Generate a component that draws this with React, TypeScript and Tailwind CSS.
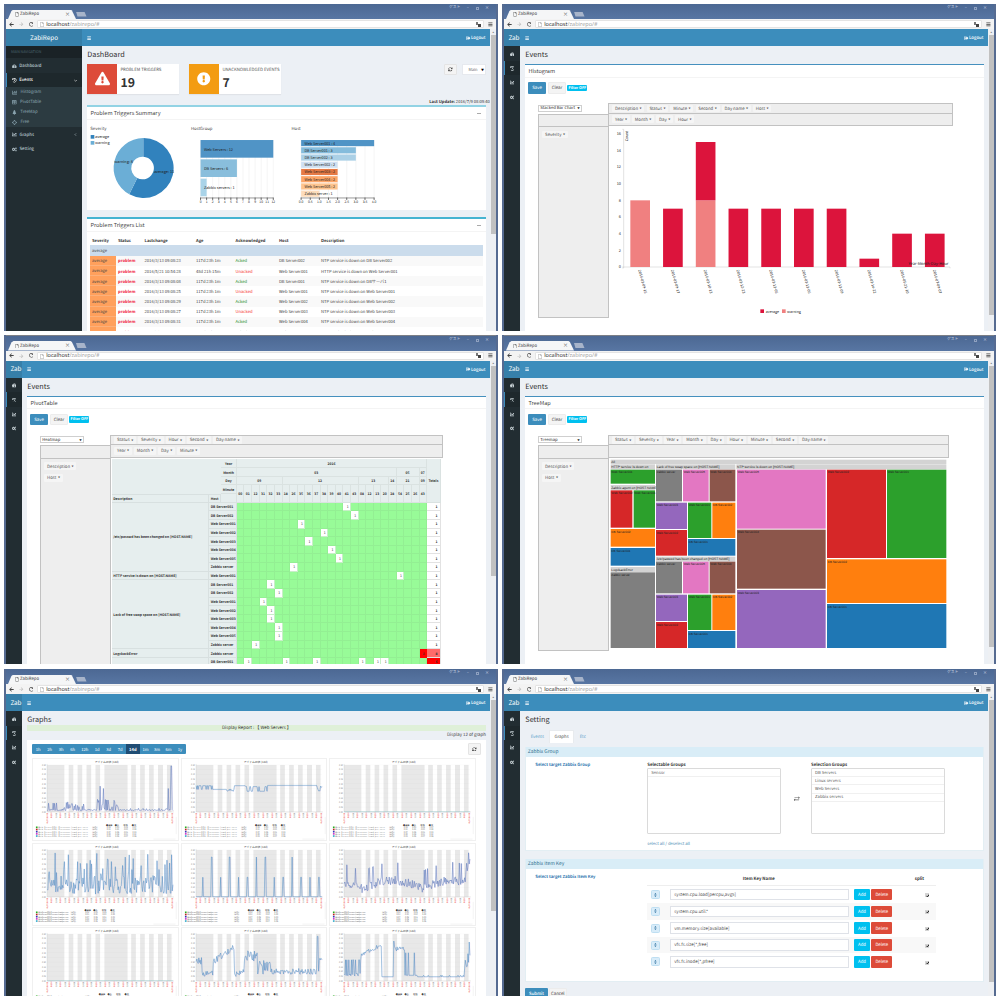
import React from "react";
import {
  FaBars, FaChartBar, FaChartLine, FaCogs, FaExchangeAlt, FaExclamationCircle, FaExclamationTriangle,
  FaHistory, FaSignOutAlt, FaTable, FaTachometerAlt, FaTree, FaArrowLeft, FaArrowRight, FaRedo, FaRegFile,
} from "react-icons/fa";
import { FaArrowsRotate } from "react-icons/fa6";

type Kids = { children?: React.ReactNode };

/* ---------- browser chrome ---------- */

function TitleBar({ tall }: { tall?: boolean }) {
  return (
    <div className={`${tall ? "h-[15.6px] border-t border-[#7c7f86]" : "h-[15px]"} flex shrink-0 items-end justify-between bg-linear-to-b from-[#4c6893] to-[#5876a3] pl-[2px]`}>
      <div className="flex items-end">
        <div className="flex h-[9.5px] w-[68px] items-center justify-between bg-[#f5f6f7] pr-[6px] pl-[6.5px] [clip-path:polygon(0_100%,5%_15%,8%_0,92%_0,94%_10%,100%_100%)]">
          <span className="flex items-center gap-[1.5px] text-[4.3px] text-[#444]">
            <FaRegFile className="h-[4.5px] w-[4px] text-[#666]" />
            ZabiRepo
          </span>
          <span className="text-[5px] text-[#333]">×</span>
        </div>
        <div className="mb-[2.5px] h-[5px] w-[10.5px] bg-[#a7b4ca] [clip-path:polygon(0_0,80%_0,100%_100%,14%_100%)]" />
      </div>
      <div className={`${tall ? "mb-[8.5px]" : "mb-[9px]"} flex items-center gap-[6.5px] pr-[7px] text-[4px] text-[#ccd5e3]`}>
        <span className="text-[3.8px]">ゲスト</span>
        <span>–</span>
        <span className="h-[3px] w-[3px] border border-[#8fa1c0]" />
        <span>×</span>
      </div>
    </div>
  );
}

function AddressBar() {
  return (
    <div className="flex h-[10.4px] shrink-0 items-center bg-[#f3f3f3] text-[#444]">
      <FaArrowLeft className="ml-[3px] size-[5px]" />
      <FaArrowRight className="ml-[5px] size-[4.5px] text-[#c4c4c4]" />
      <FaRedo className="ml-[5px] size-[4.7px]" />
      <div className="ml-[4px] flex h-[8.5px] flex-1 items-center justify-between rounded-[1px] border border-[#e4e4e4] bg-white pr-[2px] pl-[2px]">
        <span className="flex items-center pt-[0.8px] font-['Open_Sans',sans-serif] text-[5.55px] text-[#999]">
          <FaRegFile className="mr-[2px] h-[5px] w-[4px] text-[#aaa]" />
          <span className="text-[#222]">localhost</span>/zabirepo/#
        </span>
        <span className="flex h-[5px] w-[5.5px] items-start">
          <i className="block h-[3px] w-[3px] bg-[#777]" />
          <i className="mt-[2px] block h-[3px] w-[3px] bg-[#444]" />
        </span>
      </div>
      <FaBars className="mr-[3px] ml-[4px] size-[4.8px]" />
    </div>
  );
}

const miniIcons = [FaTachometerAlt, FaHistory, FaChartLine, FaCogs];

function MiniSidebar() {
  return (
    <div className="w-[16px] shrink-0 bg-[#222d32] pt-[0.5px]">
      {miniIcons.map((Icon, i) => (
        <div key={i} className={`flex h-[14.4px] items-center border-l pt-[0.6px] pl-[4.6px] ${i === 1 ? "border-[#3c8dbc] bg-[#1e282c]" : "border-transparent"}`}>
          <Icon className="size-[4.8px] text-[#cfd9dd]" />
        </div>
      ))}
    </div>
  );
}

function SideRow({ icon, label, arrow, on }: { icon: React.ReactNode; label: string; arrow?: "down" | "left"; on?: boolean }) {
  return (
    <div className={`flex h-[14.4px] items-center border-l pt-[1px] pr-[5px] pl-[5px] text-[4.3px] font-medium ${on ? "border-[#3c8dbc] bg-[#1e282c] text-white" : "border-transparent text-[#b8c7ce]"}`}>
      {icon}
      <span className="ml-[2.6px] flex-1">{label}</span>
      {arrow && (
        <svg className="size-[3.2px]" viewBox="0 0 10 10" fill="none" stroke="currentColor" strokeWidth="1.8">
          <path d={arrow === "down" ? "M1 3l4 4 4-4" : "M6.5 1.5L3 5l3.5 3.5"} />
        </svg>
      )}
    </div>
  );
}

function FullSidebar() {
  const sub: [React.ReactNode, string][] = [
    [<FaChartBar className="size-[5px]" />, "Histogram"],
    [<FaTable className="size-[4.5px]" />, "PivotTable"],
    [<FaTree className="size-[4.8px]" />, "TreeMap"],
    [<svg className="size-[5px]" viewBox="0 0 10 10" fill="none" stroke="currentColor" strokeWidth="1.4"><circle cx="5" cy="5" r="3.2" /><path d="M5 0v2M5 8v2M0 5h2M8 5h2" /></svg>, "Free"],
  ];
  return (
    <div className="w-[76px] shrink-0 bg-[#222d32]">
      <div className="flex h-[12.3px] items-center bg-[#1a2226] pt-[1px] pl-[5px] text-[3.6px] text-[#4b646f]">MAIN NAVIGATION</div>
      <SideRow icon={<FaTachometerAlt className="size-[4.6px]" />} label="Dashboard" />
      <SideRow icon={<FaHistory className="size-[4.6px]" />} label="Events" arrow="down" on />
      <div className="bg-[#2c3b41] text-[4.3px] text-[#8aa4af]">
        {sub.map(([icon, label]) => (
          <div key={label} className="flex h-[10px] items-center gap-[3.5px] pt-[0.8px] pl-[6px]">{icon}{label}</div>
        ))}
      </div>
      <SideRow icon={<FaChartLine className="size-[4.8px]" />} label="Graphs" arrow="left" />
      <SideRow icon={<FaCogs className="size-[4.8px]" />} label="Setting" />
    </div>
  );
}

function Browser({ full, tall, thumb, title, children }: Kids & { full?: boolean; tall?: boolean; thumb: string; title: string }) {
  return (
    <section className="flex min-w-0 flex-col overflow-hidden border-r-2 border-l-2 border-[#566b91] bg-white">
      <TitleBar tall={tall} />
      <AddressBar />
      <div className="flex min-h-0 flex-1">
        <div className="flex min-w-0 flex-1 flex-col">
          <header className="flex h-[16.6px] shrink-0 items-center bg-[#3c8dbc] text-white">
            <div className={`${full ? "w-[76px] justify-center" : "w-[16px] pl-[4.4px]"} flex h-full shrink-0 items-center bg-[#367fa9] text-[6.3px]`}>
              {full ? "ZabiRepo" : "Zab"}
            </div>
            <FaBars className="ml-[5px] size-[4.2px]" />
            <div className="mr-[5px] ml-auto flex items-center pt-[0.8px] text-[4.3px] font-medium">
              <FaSignOutAlt className="mr-[0.5px] size-[4.4px]" />Logout
            </div>
          </header>
          <div className="flex min-h-0 flex-1">
            {full ? <FullSidebar /> : <MiniSidebar />}
            <main className="flex min-w-0 flex-1 flex-col overflow-hidden bg-[#ecf0f5] pr-[4.5px] pl-[5.3px]">
              <h1 className="flex h-[18px] shrink-0 items-center pt-[2px] text-[7.3px] text-[#333]">{title}</h1>
              {children}
            </main>
          </div>
        </div>
        <div className="w-[5.6px] shrink-0 bg-[#eef0f3]">
          <div className="flex h-[5.5px] items-center justify-center text-[3px] text-[#777]">▴</div>
          <div className={`${thumb} mx-auto w-[4.6px] bg-[#c1c1c1]`} />
        </div>
      </div>
    </section>
  );
}

/* ---------- dashboard ---------- */

function InfoBox({ color, icon, label, value }: { color: string; icon: React.ReactNode; label: string; value: string }) {
  return (
    <div className="flex h-[29.6px] w-[92px] bg-white shadow-[0_1px_1px_rgba(0,0,0,0.05)]">
      <div className={`${color} flex w-[29.6px] shrink-0 items-center justify-center text-white`}>{icon}</div>
      <div className="min-w-0 pt-[4px] pl-[3.5px] text-[#333]">
        <div className="text-[4.3px] text-[#555]">{label}</div>
        <div className="mt-[3.4px] text-[12.3px] font-bold">{value}</div>
      </div>
    </div>
  );
}

const hostGroups: [string, number, string][] = [
  ["Web Servers : 12", 12, "#5094c6"], ["DB Servers : 6", 6, "#89bedc"], ["Zabbix servers : 1", 1, "#a9d3e8"],
];
const hosts: [string, number, string][] = [
  ["Web Server001 : 4", 4, "#5094c6"], ["DB Server001 : 3", 3, "#85bcdc"], ["DB Server002 : 3", 3, "#abd0e6"],
  ["Web Server002 : 2", 2, "#cfe0f2"], ["Web Server003 : 2", 2, "#e67a45"], ["Web Server004 : 2", 2, "#fca567"],
  ["Web Server005 : 2", 2, "#fdc38d"], ["Zabbix server : 1", 1, "#fddcbb"],
];

function SummaryCharts() {
  return (
    <svg className="h-[91px] w-full" viewBox="260 354 1197 273" fontSize="11.5" fill="#222">
      <g fill="#444" fontSize="12.8">
        <text x="270" y="384">Severity</text><text x="572" y="384">HostGroup</text><text x="874" y="384">Host</text>
      </g>
      <rect x="271" y="399" width="11" height="11" fill="#3182bd" /><text x="284" y="409">average</text>
      <rect x="271" y="417" width="11" height="11" fill="#6baed6" /><text x="284" y="427">warning</text>
      <path d="M429 408a90 90 0 1 1 -42 169L411 528A34 34 0 1 0 429 464Z" fill="#3182bd" />
      <path d="M387 577A90 90 0 0 1 429 408V464A34 34 0 0 0 411 528Z" fill="#6baed6" />
      <text x="342" y="484">warning: 8</text><text x="461" y="514">average: 11</text>
      {Array.from({ length: 13 }, (_, i) => (
        <g key={i}>
          <path d={`M${601 + i * 18.2} 414V588`} stroke="#e2e2e2" />
          <path d={`M${601 + i * 18.2} 587v7`} stroke="#222" strokeWidth="2" />
          <text x={601 + i * 18.2} y="603" textAnchor="middle" fontSize="10">{i}</text>
        </g>
      ))}
      <path d="M600 588H820" stroke="#333" strokeWidth="1.5" />
      {hostGroups.map(([n, v, c], i) => (
        <g key={n}>
          <rect x="601" y={414 + i * 58} width={v * 18.2} height="53" fill={c} />
          <text x="611" y={446 + i * 58}>{n}</text>
        </g>
      ))}
      {Array.from({ length: 9 }, (_, i) => (
        <g key={i}>
          <path d={`M${903 + i * 27.4} 414V588`} stroke="#e2e2e2" />
          <path d={`M${903 + i * 27.4} 587v7`} stroke="#222" strokeWidth="2" />
          <text x={903 + i * 27.4} y="603" textAnchor="middle" fontSize="10">{(i / 2).toFixed(1)}</text>
        </g>
      ))}
      <path d="M902 588H1123" stroke="#333" strokeWidth="1.5" />
      {hosts.map(([n, v, c], i) => (
        <g key={n}>
          <rect x="903" y={414 + i * 21.7} width={v * 54.8} height="18.5" fill={c} />
          <text x="913" y={427.5 + i * 21.7} fontSize="11.2">{n}</text>
        </g>
      ))}
    </svg>
  );
}

const triggers: [string, string, string, string, string][] = [
  ["2016/3/13 09:08:23", "117d 23h 1m", "Acked", "DB Server002", "NTP service is down on DB Server002"],
  ["2016/5/21 10:54:28", "48d 21h 15m", "Unacked", "Web Server001", "HTTP service is down on Web Server001"],
  ["2016/3/13 09:08:08", "117d 23h 1m", "Acked", "DB Server001", "NTP service is down on DBサーバ1"],
  ["2016/3/13 09:08:25", "117d 23h 1m", "Unacked", "Web Server001", "NTP service is down on Web Server001"],
  ["2016/3/13 09:08:29", "117d 23h 1m", "Acked", "Web Server002", "NTP service is down on Web Server002"],
  ["2016/3/13 09:08:27", "117d 23h 1m", "Unacked", "Web Server003", "NTP service is down on Web Server003"],
  ["2016/3/13 09:08:31", "117d 23h 1m", "Acked", "Web Server004", "NTP service is down on Web Server004"],
  ["2016/3/13 09:08:33", "117d 23h 1m", "Acked", "Web Server005", "NTP service is down on Web Server005"],
];

const triggerCols = "grid grid-cols-[26px_26.5px_51.5px_39.5px_43.5px_42px_1fr] items-center";
const triggerCell = "pt-[1.2px] pl-[1.7px]";

function PanelHead({ title, minus }: { title: string; minus?: boolean }) {
  return (
    <div className="flex h-[12.6px] shrink-0 items-center justify-between border-b border-[#f4f4f4] px-[3.2px] pt-[2.6px] text-[5.5px] text-[#444]">
      <span>{title}</span>
      {minus && <span className="mr-[2px] mb-[1px] h-px w-[4px] bg-[#aaa]" />}
    </div>
  );
}

function Dashboard() {
  return (
    <Browser full thumb="h-[199px]" title="DashBoard">
      <div className="flex shrink-0 items-start">
        <InfoBox color="bg-[#dd4b39]" label="PROBLEM TRIGGERS" value="19" icon={<FaExclamationTriangle className="size-[15px]" />} />
        <div className="w-[10px]" />
        <InfoBox color="bg-[#f39c12]" label="UNACKNOWLEDGED EVENTS" value="7" icon={<FaExclamationCircle className="size-[13.5px]" />} />
        <div className="ml-auto flex h-[11.5px] w-[12.5px] items-center justify-center rounded-[1px] border border-[#e4e4e4] bg-[#f4f4f4] text-[#333]">
          <FaArrowsRotate className="size-[4.6px]" />
        </div>
        <div className="ml-[5.5px] flex h-[11.5px] w-[23.5px] items-center justify-between border border-[#e6e9ee] bg-white pt-[1px] pr-[1px] pl-[5px] text-[4px] text-[#666]">
          Main<span className="text-[3px] text-black">▼</span>
        </div>
      </div>
      <div className="mr-[-4px] flex h-[11.4px] shrink-0 items-end justify-end pb-[0.4px] text-[4.15px] whitespace-pre text-[#333]"><b>Last Update: </b>2016/7/9 08:09:40</div>
      <div className="h-[104.6px] shrink-0 border-t-2 border-[#92d3e4] bg-white">
        <PanelHead title="Problem Triggers Summary" minus />
        <SummaryCharts />
      </div>
      <div className="mt-[7.4px] shrink-0 border-t-2 border-[#46b4d1] bg-white">
        <PanelHead title="Problem Triggers List" minus />
        <div className="px-[3px] pt-[3.5px] text-[4.15px] text-[#444]">
          <div className={`${triggerCols} h-[10.4px] pt-[1px] pl-[1.7px] font-bold text-[#333]`}>
            {["Severity", "Status", "Lastchange", "Age", "Acknowledged", "Host", "Description"].map((h) => <span key={h}>{h}</span>)}
          </div>
          <div className="flex h-[10.3px] items-center bg-[#cbdcec] pt-[1px] pl-[1.7px]">average</div>
          {triggers.map((t, i) => (
            <div key={i} className={`${triggerCols} h-[10.2px] ${i % 2 ? "bg-white" : "bg-[#f9f9f9]"}`}>
              <span className="flex h-full items-center border-b border-[#fbb07a] bg-[#ffa05c] pt-[2px] pl-[1.7px]">average</span>
              <span className={`${triggerCell} font-bold text-[#f0203a]`}>problem</span>
              <span className={triggerCell}>{t[0]}</span>
              <span className={triggerCell}>{t[1]}</span>
              <span className={`${triggerCell} ${t[2] === "Acked" ? "text-[#208a28]" : "text-[#f52a2a]"}`}>{t[2]}</span>
              <span className={triggerCell}>{t[3]}</span>
              <span className={triggerCell}>{t[4]}</span>
            </div>
          ))}
        </div>
      </div>
    </Browser>
  );
}

/* ---------- pivot pages ---------- */

function Chips({ items, col }: { items: string[]; col?: boolean }) {
  return (
    <div className={`flex ${col ? "flex-col items-start gap-[4px] pt-[3.8px]" : "h-full items-center gap-[2.2px]"} pl-[3px] text-[4.3px] text-[#555]`}>
      {items.map((t) => (
        <span key={t} className="flex h-[7.6px] items-center gap-[1.5px] rounded-[1px] bg-[#f5f5f5] px-[2.8px] pt-[1.2px]">
          {t}<span className="w-[2px] text-[2.1px]">▼</span>
        </span>
      ))}
    </div>
  );
}

type PivotProps = Kids & {
  title: string; select: string; top: string[]; cols: string[]; rows: string[]; width: string; left: string; thumb: string; tall?: boolean;
};

function PivotPage({ title, select, top, cols, rows, width, left, thumb, tall, children }: PivotProps) {
  return (
    <Browser title="Events" thumb={thumb} tall={tall}>
      <div className="min-h-0 flex-1 border-t-[1.5px] border-[#4590be] bg-white">
        <PanelHead title={title} />
        <div className="flex items-center pt-[4.8px] pl-[3px] text-[4.3px]">
          <div className="flex h-[11.4px] w-[17.6px] items-center justify-center rounded-[1px] bg-[#3c8dbc] pt-[1px] text-white">Save</div>
          <div className="ml-[2px] flex h-[11.4px] w-[18px] items-center justify-center rounded-[1px] border border-[#ececec] bg-[#f4f4f4] pt-[1px] text-[#444]">Clear</div>
          <div className="ml-[1.5px] flex h-[6.4px] w-[20px] items-center justify-center rounded-[1px] bg-[#00c0ef] pt-[0.6px] text-[3.7px] font-bold text-white">Filter OFF</div>
        </div>
        <div className={`${width} mt-[9.6px] ml-[13px]`}>
          <div className="flex h-[10.2px]">
            <div className="w-[70px] shrink-0">
              <div className="mt-[1.2px] flex h-[7.2px] w-[43.5px] items-center justify-between border border-[#cfcfcf] bg-white px-[1px] pt-[0.8px] text-[4.2px] text-[#222]">
                {select}<span className="text-[2.5px]">▼</span>
              </div>
            </div>
            <div className="flex-1 border border-[#c2c2c2] bg-[#eee]"><Chips items={top} /></div>
          </div>
          <div className="flex h-[12.4px]">
            <div className="w-[70px] shrink-0 border-t border-l border-[#c2c2c2] bg-[#eee]" />
            <div className="flex-1 border border-t-0 border-[#c2c2c2] bg-[#eee]"><Chips items={cols} /></div>
          </div>
          <div className="flex items-start">
            <div className={`${left} w-[70.5px] shrink-0 border border-[#c2c2c2] bg-[#eee]`}><Chips items={rows} col /></div>
            {children}
          </div>
        </div>
      </div>
    </Browser>
  );
}

const barData: [string, number, number][] = [
  ["2016-03-09-15", 8, 0], ["2016-03-09-17", 0, 7], ["2016-03-10-13", 8, 7], ["2016-03-12-23", 0, 7], ["2016-03-13-05", 0, 7],
  ["2016-03-13-06", 0, 7], ["2016-03-13-09", 0, 7], ["2016-03-14-22", 0, 1], ["2016-05-21-10", 0, 4], ["2016-07-09-07", 0, 4],
];

function Histogram() {
  return (
    <PivotPage title="Histogram" select="Stacked Bar Chart" top={["Description", "Status", "Minute", "Second", "Day name", "Host"]}
      cols={["Year", "Month", "Day", "Hour"]} rows={["Severity"]} width="w-[414.5px]" left="h-[192px]" thumb="h-[280px]">
      <svg className="h-[192px] w-[343.5px] shrink-0 overflow-visible" viewBox="327 378 1030.5 576" fontSize="11" fill="#222">
        <path d="M367 388h4V804h-4M367 801H1350v4" fill="none" stroke="#bbb" strokeWidth="1.3" />
        {[0, 2, 4, 6, 8, 10, 12, 14, 16].map((n) => <text key={n} x="363" y={805 - n * 25} textAnchor="end" fontSize="11.5">{n}</text>)}
        <text transform="translate(385 424) rotate(-90)" fontSize="11">Count</text>
        {barData.map(([d, w, a], i) => (
          <g key={d}>
            <rect x={391 + i * 98.2} y={801 - w * 25} width="59" height={w * 25} fill="#f08080" />
            <rect x={391 + i * 98.2} y={801 - (w + a) * 25} width="59" height={a * 25} fill="#dc143c" />
            <text transform={`translate(${415 + i * 98.2} 811) rotate(75)`} fontSize="11">{d}</text>
          </g>
        ))}
        <text x="1345" y="795" textAnchor="end" fontSize="11.8">Year-Month-Day-Hour</text>
        <rect x="781" y="928" width="11" height="11" fill="#dc143c" /><text x="797" y="938" fontSize="11">average</text>
        <rect x="846" y="928" width="11" height="11" fill="#f08080" /><text x="861" y="938" fontSize="11">warning</text>
      </svg>
    </PivotPage>
  );
}

const minutes = "00 01 12 31 32 33 18 26 35 36 37 38 39 40 41 43 08 12 13 20 28 54 25 26 43".split(" ");
const serverNames = ["DB Server001", "DB Server002", "Web Server001", "Web Server002", "Web Server003", "Web Server004", "Web Server005", "Zabbix server"];
const groups: { name: string; hosts: string[]; hits: number[][] }[] = [
  { name: "/etc/passwd has been changed on [HOST.NAME]", hosts: serverNames, hits: [[14], [15], [8], [11], [9], [12], [13], [7]] },
  { name: "HTTP service is down on [HOST.NAME]", hosts: ["Web Server001"], hits: [[21]] },
  { name: "Lack of free swap space on [HOST.NAME]", hosts: serverNames, hits: [[4], [5], [3], [4], [4], [5], [5], [2]] },
  { name: "LogckackError", hosts: ["Zabbix server"], hits: [[24]] },
  { name: "", hosts: ["DB Server001"], hits: [[1, 6, 10, 16, 18, 19]] },
];
const months: [string, number][] = [["03", 21], ["05", 3], ["07", 1]];
const days: [string, number][] = [["09", 6], ["12", 10], ["13", 4], ["14", 1], ["21", 3], ["09", 1]];

const headCell = "flex items-center justify-center border-r border-b border-[#dae2e1] bg-[#e6eeee] pt-[1px]";
const sideCell = "flex items-center overflow-hidden border-r border-b border-[#d8e0e0] bg-[#e6eeee] pt-[0.6px] pl-[1.5px]";

function PivotTable() {
  return (
    <PivotPage tall title="PivotTable" select="Heatmap" top={["Status", "Severity", "Hour", "Second", "Day name"]}
      cols={["Year", "Month", "Day", "Minute"]} rows={["Description", "Host"]} width="w-[402.5px]" left="h-[220px]" thumb="h-[210px]">
      <div className="mt-[1px] ml-[0.9px] grid shrink-0 auto-rows-[8.64px] grid-cols-[97.5px_12px_15.7px_repeat(25,7.61px)_13.5px] grid-rows-[9.4px_8.7px_8.7px_8.7px_8.7px] text-[3.4px] font-bold text-[#333]">
        <div className="col-span-2 row-span-4 bg-[#e6eeee]" />
        <div className={headCell}>Year</div>
        <div className={`${headCell} col-span-25`}>2016</div>
        <div className={`${headCell} row-span-5`}>Totals</div>
        <div className={headCell}>Month</div>
        {months.map(([m, n]) => <div key={m} className={headCell} style={{ gridColumn: `span ${n}` }}>{m}</div>)}
        <div className={headCell}>Day</div>
        {days.map(([m, n], i) => <div key={i} className={headCell} style={{ gridColumn: `span ${n}` }}>{m}</div>)}
        <div className={headCell}>Minute</div>
        {minutes.map((m, i) => <div key={i} className={`${headCell} row-span-2`}>{m}</div>)}
        <div className={`${sideCell} border-t`}>Description</div>
        <div className={`${sideCell} border-t`}>Host</div>
        <div className={headCell} />
        {groups.map((g) => (
          <React.Fragment key={g.name}>
            <div className={sideCell} style={{ gridRow: `span ${g.hosts.length}` }}>{g.name}</div>
            {g.hosts.map((h, r) => {
              const red = g.name === "LogckackError";
              const many = g.hits[r].length > 1;
              return (
                <React.Fragment key={h}>
                  <div className={`${sideCell} col-span-2 whitespace-nowrap`}>{h}</div>
                  {minutes.map((_, c) => {
                    const hit = g.hits[r].includes(c);
                    return (
                      <div key={c} className={`flex items-center justify-end border-r border-b pt-[0.6px] pr-[1.5px] font-normal ${hit ? (red ? "border-[#ff0000] bg-[#ff0000]" : "border-[#c8eec8] bg-white") : "border-[#93ef93] bg-[#98fb98]"}`}>
                        {hit ? (red ? "8" : "1") : ""}
                      </div>
                    );
                  })}
                  <div className={`flex items-center justify-end border-r border-b border-[#e2e2e2] pt-[0.6px] pr-[2px] ${red ? "bg-[#ff6b6b]" : many ? "bg-[#ff0000]" : "bg-white"}`}>{red ? "8" : many ? "6" : "1"}</div>
                </React.Fragment>
              );
            })}
          </React.Fragment>
        ))}
      </div>
    </PivotPage>
  );
}

const BL = "#1f77b4", OR = "#ff7f0e", GR = "#2ca02c", RD = "#d62728", PU = "#9467bd", BR = "#8c564b", PK = "#e377c2", GY = "#7f7f7f", HD = "#d3d3d3";
type Tile = [number, number, number, number, string, string];
const cluster = (y: number, h: number): Tile[] => [
  [468, y, 546, y + 95, GY, "Zabbix server"], [549, y, 626, y + 95, PK, "Web Server005"], [629, y, 706, y + 95, BR, "Web Server004"],
  [468, y + 99, 561, y + 178, PU, "Web Server003"], [564, y + 99, 634, y + 205, GR, "Web Server001"], [637, y + 99, 706, y + 205, OR, "DB Server002"],
  [468, y + 181, 561, y + h, RD, "Web Server002"], [564, y + 208, 706, y + h, BL, "DB Server001"],
];
const tiles: Tile[] = [
  [332, 375, 1339, 388, HD, "All"],
  [332, 389, 465, 404, HD, "HTTP service is down on"], [332, 405, 465, 447, GR, "Web Server001"],
  [332, 451, 465, 466, HD, "Zabbix agent on [HOST.NAME]"], [332, 467, 397, 579, RD, "Web Server002"], [401, 467, 465, 579, GR, "Web Server001"],
  [332, 583, 465, 636, OR, "DB Server002"], [332, 640, 465, 693, BL, "DB Server001"],
  [332, 697, 465, 712, HD, "LogckackError"], [332, 713, 465, 940, GY, "Zabbix server"],
  [468, 389, 706, 404, HD, "Lack of free swap space on [HOST.NAME]"], ...cluster(405, 258),
  [468, 666, 706, 681, HD, "/etc/passwd has been changed on [HOST.NAME]"], ...cluster(681, 259),
  [709, 389, 1339, 404, HD, "NTP service is down on [HOST.NAME]"],
  [711, 405, 977, 582, PK, "Web Server005"], [711, 585, 977, 762, BR, "Web Server004"], [711, 766, 977, 940, PU, "Web Server003"],
  [981, 405, 1158, 670, RD, "Web Server002"], [1161, 405, 1339, 670, GR, "Web Server001"],
  [981, 674, 1339, 805, OR, "DB Server002"], [981, 808, 1339, 940, BL, "DB Server001"],
];

function TreeMap() {
  return (
    <PivotPage tall title="TreeMap" select="Treemap" top={["Status", "Severity", "Year", "Month", "Day", "Hour", "Minute", "Second", "Day name"]}
      cols={[]} rows={["Description", "Host"]} width="w-[410.5px]" left="h-[193px]" thumb="h-[281px]">
      <svg className="h-[193px] w-[339px] shrink-0" viewBox="327 370 1017 579" fontFamily="Liberation Sans, sans-serif" fill="#222">
        {tiles.map(([x, y, x2, y2, c, t], i) => (
          <g key={i}>
            <rect x={x} y={y} width={x2 - x} height={y2 - y} fill={c} />
            <text x={x + 2} y={y + 11} fontSize={c === HD ? 10 : 9.2}>{t}</text>
          </g>
        ))}
      </svg>
    </PivotPage>
  );
}

/* ---------- graphs ---------- */

const bands: [number, number][] = [[0, 52], [65, 14], [92, 14], [119, 14], [146, 14], [173, 70], [254, 14], [281, 14], [308, 14], [335, 15], [362, 14]];

function noise(seed: number) {
  let s = seed;
  return () => {
    s = (s * 16807) % 2147483647;
    return s / 2147483647;
  };
}

function series(kind: number): number[] {
  const r = noise(kind * 7919 + 17);
  return Array.from({ length: 191 }, (_, i) => {
    const x = i * 2;
    const n = r();
    switch (kind) {
      case 0: {
        const burst = x > 50 && x < 115 ? 0.2 : x > 150 && x < 215 ? 0.24 : 0.05;
        if (x === 160) return 0.55;
        if (x === 170) return 0.5;
        if (x === 366) return 0.5;
        if (x === 374 || x === 376) return 0.98;
        return 0.03 + n * n * burst + (x < 30 && n > 0.8 ? 0.12 : 0);
      }
      case 1:
        if (x < 50) return 0.52 + (n > 0.7 ? -0.04 : 0.04);
        if (x < 92) return 0.48;
        if (x < 115) return 0.44 + n * 0.05;
        if (x < 150) return 0.56;
        if (x < 215) return n > 0.6 ? 0.54 : 0.44;
        if (x < 365) return 0.565;
        return 0.42 + n * 0.13;
      case 2: case 6: return 0.005;
      case 3: return 0.06 + n * 0.5 + (n > 0.8 ? r() * 0.42 : 0);
      case 4: {
        const k = Math.round((x - 20) / 27);
        const near = Math.abs(x - 20 - k * 27) < 1.1;
        return near ? ([0, 2, 4, 5, 8, 9, 11, 12, 13].includes(k) ? 0.42 : 0.85) : 0.005;
      }
      case 5: return x > 366 ? 0.55 + n * 0.4 : 0.08 + 0.18 * Math.abs(Math.sin(x / 58 + 2.2)) + n * 0.2 + (n > 0.93 ? 0.28 : 0);
      case 7: {
        if (x < 18) return 0.35 + n * 0.15;
        if (x < 52) return 0.1 + n * 0.12;
        if (x < 115) return 0.35 + (x - 52) * 0.005 + n * 0.14;
        if (x < 145) return 0.08 + n * 0.12 + (x - 115) * 0.003;
        if (x < 185) return 0.4 + n * 0.25;
        if (x > 364 && x < 370) return 0.95;
        return 0.14 + n * (x < 225 ? 0.32 : 0.13) + (x > 370 ? 0.25 : 0);
      }
      default:
        if (x < 52) return n > 0.8 ? 0.45 : 0.1 + n * 0.08;
        if (x < 114) return 0.52 + (x - 52) * 0.0035 + n * 0.08;
        if (x < 150) return 0.09;
        if (x === 150) return 0.85;
        if (x < 184) return 0.63 + n * 0.1;
        if (x < 222) return n > 0.6 ? 0.6 : 0.12;
        if (x > 362) return 0.25 + n * 0.7;
        return 0.09 + (n > 0.9 ? 0.03 : 0);
    }
  });
}

const legendText = ["Web Server001: Processor load per core", "Web Server002: Processor load per core", "Web Server003: Processor load per core", "Web Server004: Processor load per core", "Web Server005: Processor load per core"];
const legendColor = ["#22aa22", "#bb2222", "#3333bb", "#cc33cc", "#33aacc"];

function GraphCard({ kind }: { kind: number }) {
  const pts = series(kind);
  const line = pts.map((v, i) => `${i ? "L" : "M"}${44 + i * 2} ${163 - v * 142}`).join("");
  const shift = kind === 3 ? -65 : kind > 2 ? -22 : 0;
  return (
    <div className="h-[83.4px] w-[146.8px] shrink-0 border border-[#f0f0f0] bg-white">
      <svg className="h-full w-full" viewBox="3 3 434 246">
        <text x="224" y="16" textAnchor="middle" fontSize="8.5" fill="#444">アイテムの値 (14d)</text>
        {bands.map(([x, w]) => <rect key={x} x={44 + x} y="21" width={w} height="142" fill="#e8e8e8" />)}
        {Array.from({ length: 11 }, (_, i) => (
          <g key={i}>
            <path d={`M44 ${21 + i * 14.2}H424`} stroke="#000" strokeOpacity="0.06" strokeWidth="1" />
            <text x="40" y={23.5 + i * 14.2} textAnchor="end" fill="#777" fontSize="6">{((10 - i) * 0.05).toFixed(2)}</text>
          </g>
        ))}
        {Array.from({ length: 29 }, (_, i) => {
          const edge = i === 0 || i === 28;
          return (
            <text key={i} transform={`translate(${46 + i * 13.5} ${edge ? 198 : 181}) rotate(-90)`} fontSize="6" fill={edge || i % 2 ? "#ee4444" : "#777"}>
              {edge ? "06/25 08:10" : i % 2 ? "06/28" : "12:00"}
            </text>
          );
        })}
        <path d="M44 18V163H427" fill="none" stroke="#bbb" strokeWidth="1" />
        <path d={line} fill="none" stroke="#a3c" strokeWidth="0.6" opacity="0.3" transform="translate(1.5 1.5)" />
        <path d={line} fill="none" stroke={kind === 2 || kind === 6 ? "#8fd0cd" : kind === 0 || kind === 5 ? "#5578b8" : "#4a8dc2"} strokeWidth="1.5" />
        {["最新値", "最小", "平均", "最大"].map((t, i) => (
          <text key={t} x={222 + i * 26 + shift} y="204" fontWeight="bold" fontSize="6.5" fill="#333">{t}</text>
        ))}
        {legendText.map((t, i) => (
          <g key={t} fill="#555" fontSize="6">
            <rect x="10" y={207 + i * 6.6} width="5" height="5" fill={legendColor[i]} />
            <text x="17" y={212 + i * 6.6} textLength={kind < 3 ? 150 : 92}>{t}</text>
            <text x={180 + (kind === 3 ? -65 : shift)} y={212 + i * 6.6}>[平均]</text>
            {[0, 1, 2, 3].map((c) => <text key={c} x={224 + c * 26 + shift} y={212 + i * 6.6}>0.0{(i * 3 + c * 2 + 1) % 10}</text>)}
          </g>
        ))}
        <path d="M365 245H432M434 178V230" stroke="#ddd" strokeWidth="1" />
      </svg>
    </div>
  );
}

function Graphs() {
  return (
    <Browser title="Graphs" thumb="h-[211px]">
      <div className="-mt-[4.3px] flex h-[6.2px] shrink-0 items-center justify-center bg-[#dff0d8] pt-[0.8px] text-[4.4px] text-[#333]">Display Report : 【 Web Servers 】</div>
      <div className="flex h-[9px] shrink-0 items-center justify-end pb-[0.6px] text-[4.4px] text-[#444]">Display 12 of graph</div>
      <div className="min-h-0 flex-1 overflow-hidden bg-white pl-[5px]">
        <div className="flex h-[18px] items-center justify-between pt-[0.6px] pr-[5px]">
          <div className="flex h-[9.4px] items-stretch overflow-hidden rounded-[1px] bg-[#3c8dbc] text-[4.1px] text-white">
            {["1h", "2h", "3h", "6h", "12h", "1d", "3d", "7d", "14d", "1m", "3m", "6m", "1y"].map((t) => (
              <span key={t} className={`flex items-center justify-center pt-[1px] ${t === "14d" ? "w-[14px] bg-[#204d74] font-bold" : t === "12h" ? "w-[13px]" : "w-[11.5px]"}`}>{t}</span>
            ))}
          </div>
          <div className="flex h-[11.5px] w-[13px] items-center justify-center rounded-[1px] border border-[#e4e4e4] bg-[#f4f4f4] text-[#333]">
            <FaArrowsRotate className="size-[4.6px]" />
          </div>
        </div>
        <div className="grid w-[444px] grid-cols-3 gap-x-[1.2px] gap-y-[1.3px]">
          {Array.from({ length: 9 }, (_, k) => <GraphCard key={k} kind={k} />)}
        </div>
      </div>
    </Browser>
  );
}

/* ---------- settings ---------- */

function GroupList({ title, items, width }: { title: string; items: string[]; width: string }) {
  return (
    <div className={width}>
      <div className="h-[4.9px] text-[4.3px] font-bold text-[#333]">{title}</div>
      <div className="h-[66px] rounded-[1px] border border-[#dadada] text-[4.2px] text-[#555]">
        {items.map((t) => <div key={t} className="flex h-[8.3px] items-center border-b border-[#f0f0f0] pt-[0.8px] pl-[3px]">{t}</div>)}
      </div>
    </div>
  );
}

function SettingPanel({ title, hint, height, children }: Kids & { title: string; hint: string; height: string }) {
  return (
    <div className={`${height} shrink-0 border border-t-0 border-[#e3eef3] bg-white`}>
      <div className="flex h-[10px] items-center bg-[#d9edf7] pt-[1px] pl-[1.5px] text-[4.9px] text-[#31708f]">{title}</div>
      <div className="flex">
        <div className="w-[121px] shrink-0 pt-[6.4px] pl-[9px] text-[4.2px] font-bold text-[#3279b0]">{hint}</div>
        {children}
      </div>
    </div>
  );
}

function Setting() {
  const keys = ["system.cpu.load[percpu,avg5]", "system.cpu.util.*", "vm.memory.size[available]", "vfs.fs.size[*,free]", "vfs.fs.inode[*,pfree]"];
  return (
    <Browser title="Setting" thumb="h-[282px]">
      <div className="mt-[0.6px] flex h-[17px] shrink-0 items-start text-[4.3px] text-[#5b9fcb]">
        <span className="flex h-[13.5px] w-[24px] items-center justify-center pt-[1px]">Events</span>
        <span className="flex h-[13.5px] w-[24.5px] items-center justify-center border border-b-0 border-[#e8ebee] bg-white pt-[0.4px] text-[#555]">Graphs</span>
        <span className="flex h-[13.5px] w-[18px] items-center justify-center pt-[1px]">Etc</span>
      </div>
      <SettingPanel title="Zabbix Group" hint="Select target Zabbix Group" height="h-[104.8px]">
        <div className="pt-[6.2px]">
          <div className="flex items-start">
            <GroupList title="Selectable Groups" width="w-[134px]" items={["Sensor"]} />
            <div className="flex h-[71px] w-[29.8px] items-center justify-center pl-[1px]"><FaExchangeAlt className="size-[5.5px] -skew-x-12 text-[#666]" /></div>
            <GroupList title="Selection Groups" width="w-[133.5px]" items={["DB Servers", "Linux servers", "Web Servers", "Zabbix servers"]} />
          </div>
          <div className="mt-[7.8px] text-[4.2px] text-[#3c7fae]">select all / deselect all</div>
        </div>
      </SettingPanel>
      <div className="h-[7.4px] shrink-0" />
      <SettingPanel title="Zabbix Item Key" hint="Select target Zabbix Item Key" height="h-[122.8px]">
        <div className="w-[289px] pt-[4px] text-[4.3px]">
          <div className="flex h-[13.5px] items-center border-b border-[#eee] pt-[1px] font-bold text-[#333]">
            <span className="w-[223px] text-center">Item Key Name</span>
            <span className="ml-[44.5px]">split</span>
          </div>
          {keys.map((k, i) => (
            <div key={k} className={`flex h-[16.8px] items-center ${i % 2 ? "bg-[#f8f8f8]" : "bg-white"}`}>
              <span className="ml-[3.5px] flex h-[9px] w-[9px] items-center justify-center rounded-[1.5px] border border-[#bfdff2] bg-[#d8ecf9] text-[#2c6f9e]">
                <svg className="h-[4px] w-[2.8px]" viewBox="0 0 6 10" fill="currentColor"><path d="M3 0l3 4H0zM3 10l3-4H0z" /></svg>
              </span>
              <span className="ml-[10.5px] flex h-[11.6px] w-[178.5px] items-center border border-[#dfe2e8] bg-white pt-[1px] pl-[3px] text-[4.4px] text-[#555]">{k}</span>
              <span className="ml-[5px] flex h-[11.6px] w-[16.5px] items-center justify-center rounded-[1px] bg-[#00c0ef] pt-[1px] text-white">Add</span>
              <span className="ml-[1px] flex h-[11.6px] w-[21px] items-center justify-center rounded-[1px] bg-[#dd4b39] pt-[1px] text-white">Delete</span>
              <span className="mt-[1.5px] ml-[33px] flex size-[4px] items-center justify-center bg-[#d4d4d4]">
                <svg className="size-[3.6px]" viewBox="0 0 10 10" fill="none" stroke="#111" strokeWidth="2.6"><path d="M1 5l3 3 5-7" /></svg>
              </span>
            </div>
          ))}
        </div>
      </SettingPanel>
      <div className="mt-[6.5px] flex shrink-0 text-[4.3px]">
        <span className="flex h-[11.5px] w-[22.5px] items-center justify-center rounded-[1px] bg-[#3c8dbc] font-medium text-white">Submit</span>
        <span className="ml-[1px] flex h-[11.5px] w-[18px] items-center justify-center rounded-[1px] border border-[#ececec] bg-[#f4f4f4] text-[#444]">Cancel</span>
      </div>
    </Browser>
  );
}

export default function App() {
  return (
    <div className="h-[1000px] w-[1000px] overflow-hidden bg-white p-[4px] font-['Noto_Sans_CJK_JP',sans-serif] leading-none whitespace-nowrap [text-rendering:geometricPrecision]">
      <div className="grid grid-cols-[494px_494px] gap-x-[4px]">
        <div className="grid h-[327px]"><Dashboard /></div>
        <div className="grid h-[327px]"><Histogram /></div>
        <div className="mt-[4px] grid h-[329px]"><PivotTable /></div>
        <div className="mt-[4px] grid h-[329px]"><TreeMap /></div>
        <div className="mt-[5px] grid h-[327px]"><Graphs /></div>
        <div className="mt-[5px] grid h-[327px]"><Setting /></div>
      </div>
    </div>
  );
}
